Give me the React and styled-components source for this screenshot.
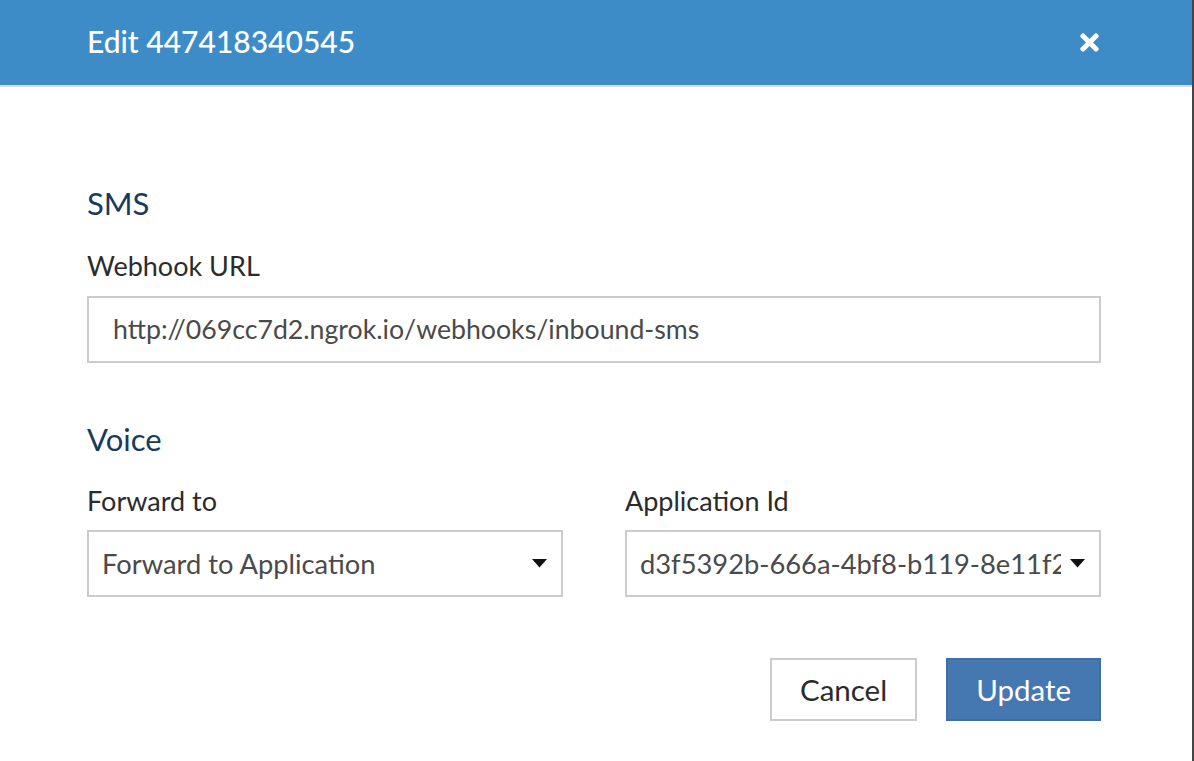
import React from 'react'
import styled, { createGlobalStyle } from 'styled-components'
import { FaTimes } from 'react-icons/fa'

const GlobalStyle = createGlobalStyle`
  body {
    margin: 0;
    background: #454545;
    font-family: Lato, "Open Sans", sans-serif;
  }
`

const Field = ({ label, children }) => (
    <FieldWrap>
        <Label>{label}</Label>
        {children}
    </FieldWrap>
)

const Select = ({ value }) => (
    <SelectBox>
        <SelectValue>{value}</SelectValue>
        <svg width="15" height="9" viewBox="0 0 15 9">
            <path d="M0 0 H15 L7.5 8.5 Z" fill="#111" />
        </svg>
    </SelectBox>
)

const App = () => {
    return (
        <Page>
            <GlobalStyle />
            <Modal>
                <Header>
                    <Title>Edit 447418340545</Title>
                    <Close><FaTimes size={27} /></Close>
                </Header>
                <Body>
                    <Heading>SMS</Heading>
                    <Field label="Webhook URL">
                        <TextInput>http://069cc7d2.ngrok.io/webhooks/inbound-sms</TextInput>
                    </Field>

                    <Heading spaced>Voice</Heading>
                    <Row>
                        <Field label="Forward to">
                            <Select value="Forward to Application" />
                        </Field>
                        <Field label="Application Id">
                            <Select value="d3f5392b-666a-4bf8-b119-8e11f2246c3f" />
                        </Field>
                    </Row>

                    <Footer>
                        <Button>Cancel</Button>
                        <Button primary>Update</Button>
                    </Footer>
                </Body>
            </Modal>
        </Page>
    )
}

export default App


// styling
const Page = styled.div`
    display: flex;
    min-height: 761px;
`

const Modal = styled.div`
    width: 1192px;
    background: #fff;
    display: flex;
    flex-direction: column;
`

const Header = styled.div`
    height: 85px;
    background: #3d8cc8;
    border-bottom: 2px solid #dadada;
    display: flex;
    align-items: center;
    justify-content: space-between;
    padding: 0 92px 0 87px;
    color: #fff;
`

const Title = styled.h1`
    margin: 0 0 4px;
    font-size: 30px;
    font-weight: 500;
    line-height: 1.2;
`

const Close = styled.span`
    display: flex;
    margin: 0 -3px 1px 0;
`

const Body = styled.div`
    padding: 98px 91px 0 87px;
`

const Heading = styled.h2`
    margin: ${props => props.spaced ? '58px' : '0'} 0 ${props => props.spaced ? '27px' : '28px'};
    font-size: 31px;
    font-weight: 400;
    line-height: 1.2;
    color: #173b5b;
`

const FieldWrap = styled.div`
    display: flex;
    flex-direction: column;
    gap: 13px;
    min-width: 0;
`

const Label = styled.label`
    font-size: 27px;
    line-height: 1.2;
    color: #2b2b2b;
`

const TextInput = styled.div`
    box-sizing: border-box;
    height: 67px;
    border: 2px solid #cccccc;
    padding: 0 24px;
    display: flex;
    align-items: center;
    font-size: 26.7px;
    color: #4a4a4a;
`

const Row = styled.div`
    display: grid;
    grid-template-columns: minmax(0, 1fr) minmax(0, 1fr);
    gap: 62px;
`

const SelectBox = styled.div`
    box-sizing: border-box;
    height: 67px;
    border: 2px solid #cccccc;
    padding: 0 14px 0 13px;
    display: flex;
    align-items: center;
    gap: 9px;
`

const SelectValue = styled.span`
    flex: 1;
    min-width: 0;
    overflow: hidden;
    white-space: nowrap;
    font-size: 27.3px;
    color: #4a4a4a;
`

const Footer = styled.div`
    display: flex;
    justify-content: flex-end;
    gap: 29px;
    margin-top: 61px;
`

const Button = styled.button`
    box-sizing: border-box;
    height: 63px;
    padding: 0 28px;
    border: 2px solid ${props => props.primary ? '#3e6fa8' : '#cccccc'};
    background: ${props => props.primary ? '#4577b1' : '#fff'};
    color: ${props => props.primary ? '#fff' : '#2b2b2b'};
    font-family: Lato, "Open Sans", sans-serif;
    font-size: 29.5px;
    cursor: pointer;
`
